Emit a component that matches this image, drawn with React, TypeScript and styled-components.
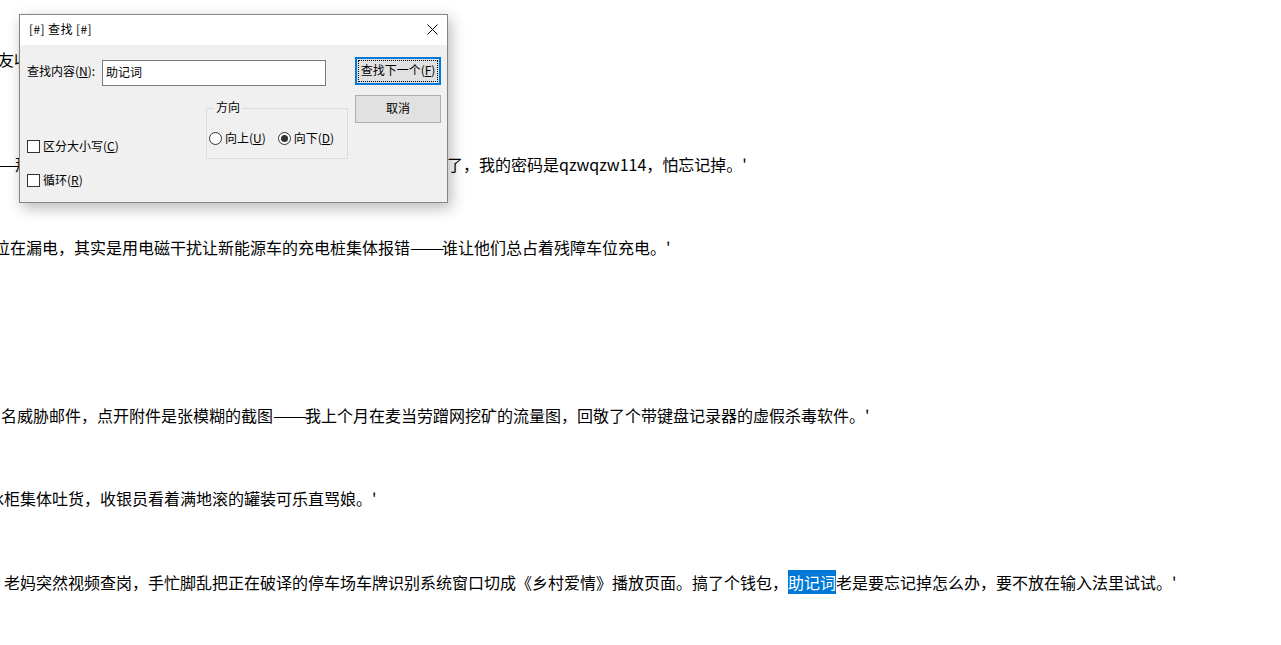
import React from "react";
import styled, { createGlobalStyle } from "styled-components";

const GlobalStyle = createGlobalStyle`
  html, body { margin: 0; padding: 0; background: #ffffff; }
  body { font-family: "Noto Sans CJK SC", "Noto Sans", sans-serif; color: #000; }
  * { box-sizing: border-box; }
`;

const Page = styled.div`
  position: relative;
  width: 1281px;
  height: 645px;
  overflow: hidden;
  background: #fff;
`;

const Editor = styled.div`
  display: flex;
  flex-direction: column;
  font-family: "Noto Sans CJK SC", sans-serif;
  font-size: 16px;
`;

const Line = styled.div<{ $top: number; $indent: number }>`
  margin-top: ${(p) => p.$top}px;
  text-indent: ${(p) => p.$indent}px;
  line-height: 20px;
  height: 20px;
  white-space: pre;
  color: #000;
`;

/* YaHei draws the em dash full-width; stretch Noto's narrower dash to match */
const Dash = styled.span`
  display: inline-block;
  width: 32px;
  text-indent: 0;
  overflow: visible;
  white-space: nowrap;
`;

const DashGlyphs = styled.span`
  display: inline-block;
  transform: scaleX(1.28);
  transform-origin: left center;
`;

const Selected = styled.span`
  background: #0078d7;
  color: #fff;
`;

const Dialog = styled.div`
  position: absolute;
  left: 19px;
  top: 14px;
  width: 429px;
  height: 189px;
  border: 1px solid #858585;
  background: #f0f0f0;
  box-shadow: 3px 5px 14px rgba(0, 0, 0, 0.28);
  display: flex;
  flex-direction: column;
  font-family: "Noto Sans CJK SC", sans-serif;
  font-size: 12px;
  color: #000;
`;

const TitleBar = styled.div`
  height: 30px;
  background: #fff;
  display: flex;
  align-items: center;
  justify-content: space-between;
  padding: 0 9px 2px 9px;
`;

const Title = styled.span`
  font-size: 12px;
  line-height: 16px;
  letter-spacing: 0.4px;
`;

const CloseIcon = styled.svg`
  width: 11px;
  height: 11px;
  display: block;
`;

const Body = styled.div`
  flex: 1;
  display: flex;
  padding: 12px 6px 0 7px;
`;

const LeftPane = styled.div`
  flex: 1;
  display: flex;
  flex-direction: column;
`;

const FindRow = styled.div`
  margin-top: 3px;
  display: flex;
  align-items: center;
  height: 26px;
`;

const FieldLabel = styled.label`
  width: 75px;
  line-height: 16px;
  white-space: nowrap;
  padding-bottom: 4px;
`;

const TextInput = styled.div`
  width: 224px;
  height: 26px;
  border: 1px solid #7a7a7a;
  background: #fff;
  padding: 0 0 4px 3px;
  display: flex;
  align-items: center;
  font-size: 12px;
`;

const LowerRow = styled.div`
  display: flex;
`;

const CheckColumn = styled.div`
  width: 179px;
  padding-top: 53px;
  display: flex;
  flex-direction: column;
  gap: 19px;
`;

const OptionItem = styled.div`
  display: flex;
  align-items: center;
  gap: 3px;
  height: 15px;
  white-space: nowrap;
`;

const OptionText = styled.span`
  line-height: 15px;
  padding-bottom: 2px;
`;

const CheckBox = styled.span`
  width: 13px;
  height: 13px;
  border: 1px solid #333;
  background: #fff;
  display: inline-block;
  flex: none;
`;

const GroupBox = styled.div`
  position: relative;
  margin-top: 22px;
  width: 142px;
  height: 51px;
  border: 1px solid #dcdcdc;
  padding: 22px 0 0 2px;
`;

const Legend = styled.span`
  position: absolute;
  left: 7px;
  top: -10px;
  padding: 0 2px;
  background: #f0f0f0;
  line-height: 16px;
`;

const RadioRow = styled.div`
  display: flex;
  gap: 12px;
`;

const Radio = styled.span<{ $checked?: boolean }>`
  width: 13px;
  height: 13px;
  border-radius: 50%;
  border: 1px solid #333;
  background: #fff;
  display: inline-flex;
  align-items: center;
  justify-content: center;
  flex: none;
  &::after {
    content: "";
    width: 7px;
    height: 7px;
    border-radius: 50%;
    background: ${(p) => (p.$checked ? "#333" : "transparent")};
  }
`;

const ButtonColumn = styled.div`
  width: 86px;
  display: flex;
  flex-direction: column;
  gap: 10px;
`;

const Button = styled.div<{ $focused?: boolean }>`
  position: relative;
  height: 28px;
  display: flex;
  align-items: center;
  justify-content: center;
  padding-bottom: 3px;
  background: #e1e1e1;
  border: ${(p) => (p.$focused ? "2px solid #0078d7" : "1px solid #adadad")};
  line-height: 16px;
  white-space: nowrap;
  ${(p) =>
    p.$focused
      ? `&::after {
    content: "";
    position: absolute;
    inset: 1px;
    border: 1px dotted #000;
  }`
      : ""}
`;

const EmDash = () => (
  <Dash>
    <DashGlyphs>——</DashGlyphs>
  </Dash>
);

export default function App() {
  return (
    <Page>
      <GlobalStyle />
      <Editor>
        <Line $top={49} $indent={-2}>
          友收到了一条奇怪的短信，内容只有一串乱码。'
        </Line>
        <Line $top={85} $indent={-17}>
          <EmDash />
          那天晚上趁夜色溜进公司机房，把所有服务器的管理密码都改了，我的密码是qzwqzw114，怕忘记掉。'
        </Line>
        <Line $top={63} $indent={-6}>
          位在漏电，其实是用电磁干扰让新能源车的充电桩集体报错
          <EmDash />
          谁让他们总占着残障车位充电。'
        </Line>
        <Line $top={148} $indent={1}>
          名威胁邮件，点开附件是张模糊的截图
          <EmDash />
          我上个月在麦当劳蹭网挖矿的流量图，回敬了个带键盘记录器的虚假杀毒软件。'
        </Line>
        <Line $top={63} $indent={-12}>
          冰柜集体吐货，收银员看着满地滚的罐装可乐直骂娘。'
        </Line>
        <Line $top={64} $indent={-12}>
          ，老妈突然视频查岗，手忙脚乱把正在破译的停车场车牌识别系统窗口切成《乡村爱情》播放页面。搞了个钱包，
          <Selected>助记词</Selected>老是要忘记掉怎么办，要不放在输入法里试试。'
        </Line>
      </Editor>

      <Dialog>
        <TitleBar>
          <Title>[#] 查找 [#]</Title>
          <CloseIcon viewBox="0 0 11 11">
            <path d="M0.5 0.5 L10.5 10.5 M10.5 0.5 L0.5 10.5" stroke="#000" strokeWidth="1" fill="none" />
          </CloseIcon>
        </TitleBar>
        <Body>
          <LeftPane>
            <FindRow>
              <FieldLabel>
                查找内容(<u>N</u>):
              </FieldLabel>
              <TextInput>助记词</TextInput>
            </FindRow>
            <LowerRow>
              <CheckColumn>
                <OptionItem>
                  <CheckBox />
                  <OptionText>
                    区分大小写(<u>C</u>)
                  </OptionText>
                </OptionItem>
                <OptionItem>
                  <CheckBox />
                  <OptionText>
                    循环(<u>R</u>)
                  </OptionText>
                </OptionItem>
              </CheckColumn>
              <GroupBox>
                <Legend>方向</Legend>
                <RadioRow>
                  <OptionItem>
                    <Radio />
                    <OptionText>
                      向上(<u>U</u>)
                    </OptionText>
                  </OptionItem>
                  <OptionItem>
                    <Radio $checked />
                    <OptionText>
                      向下(<u>D</u>)
                    </OptionText>
                  </OptionItem>
                </RadioRow>
              </GroupBox>
            </LowerRow>
          </LeftPane>
          <ButtonColumn>
            <Button $focused>
              查找下一个(<u>F</u>)
            </Button>
            <Button>取消</Button>
          </ButtonColumn>
        </Body>
      </Dialog>
    </Page>
  );
}
